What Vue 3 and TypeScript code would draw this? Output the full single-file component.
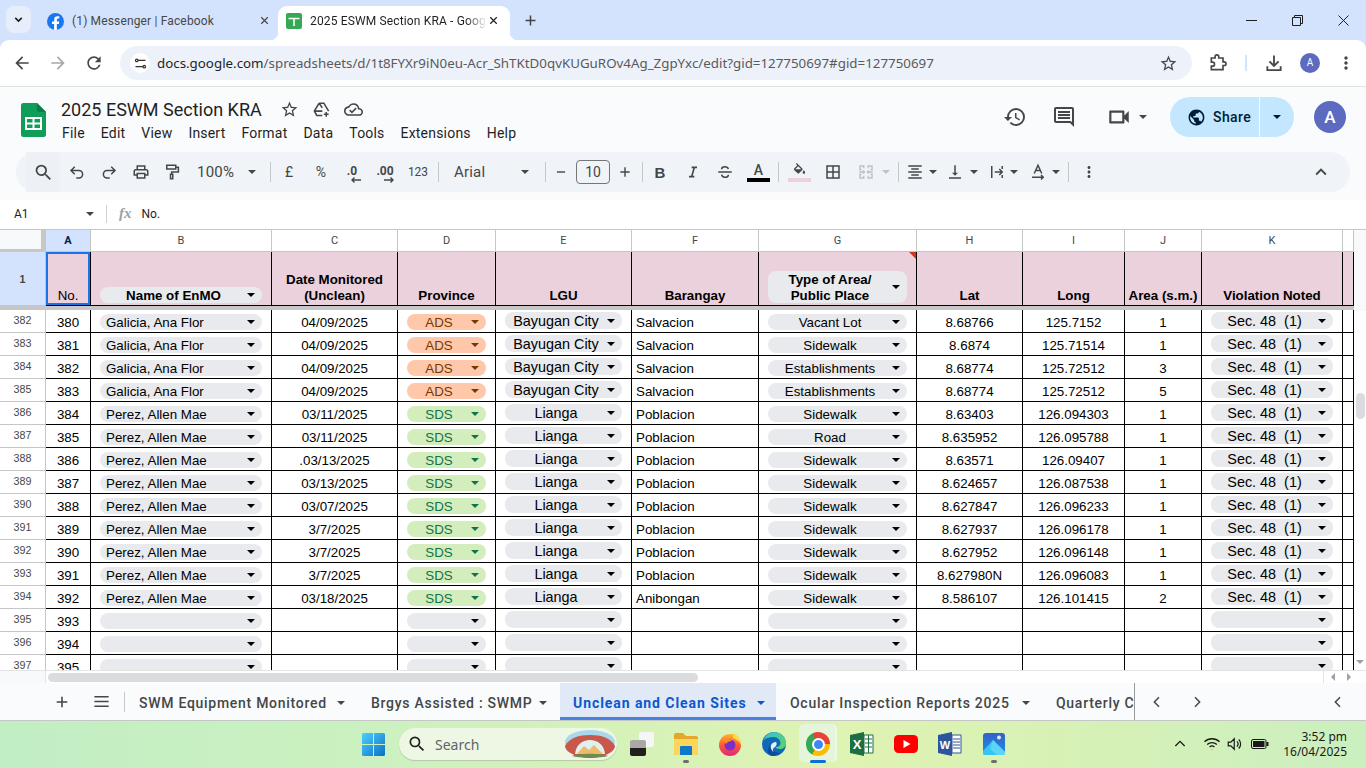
<script setup lang="ts">
import { h } from 'vue'

interface Row {
  n: number
  no: number
  name?: string
  date?: string
  prov?: 'ADS' | 'SDS'
  lgu?: string
  brgy?: string
  type?: string
  lat?: string
  long?: string
  area?: string
  sec?: string
}

const ICONS: Record<string, { d: string; stroke?: number }> = {
  back: { d: 'M20 11H7.83l5.59-5.59L12 4l-8 8 8 8 1.41-1.41L7.83 13H20v-2z' },
  forward: { d: 'M12 4l-1.41 1.41L16.17 11H4v2h12.17l-5.58 5.59L12 20l8-8z' },
  reload: { d: 'M17.65 6.35A7.958 7.958 0 0 0 12 4c-4.42 0-7.99 3.58-7.99 8s3.57 8 7.99 8c3.73 0 6.84-2.55 7.73-6h-2.08A5.99 5.99 0 0 1 12 18c-3.31 0-6-2.69-6-6s2.69-6 6-6c1.66 0 3.14.69 4.22 1.78L13 11h7V4l-2.35 2.35z' },
  star: { d: 'M22 9.24l-7.19-.62L12 2 9.19 8.63 2 9.24l5.46 4.73L5.82 21 12 17.27 18.18 21l-1.63-7.03L22 9.24zM12 15.4l-3.76 2.27 1-4.28-3.32-2.88 4.38-.38L12 6.1l1.71 4.04 4.38.38-3.32 2.88 1 4.28L12 15.4z' },
  puzzle: { d: 'M4 6h4.5V4.5a2.2 2.2 0 0 1 4.4 0V6H18v4.6h1.4a2.2 2.2 0 0 1 0 4.4H18v5H4v-4.2h1.4a2.4 2.4 0 0 0 0-4.8H4z', stroke: 2 },
  download: { d: 'M12 3v12M6.5 10l5.5 5.5 5.5-5.5M4 16v4.5h16V16', stroke: 2.2 },
  kebab: { d: 'M12 8c1.1 0 2-.9 2-2s-.9-2-2-2-2 .9-2 2 .9 2 2 2zm0 2c-1.1 0-2 .9-2 2s.9 2 2 2 2-.9 2-2-.9-2-2-2zm0 6c-1.1 0-2 .9-2 2s.9 2 2 2 2-.9 2-2-.9-2-2-2z' },
  tune: { d: 'M8 7a2 2 0 1 0-4 0 2 2 0 0 0 4 0zM8 7h12M20 17a2 2 0 1 0-4 0 2 2 0 0 0 4 0zM16 17H4', stroke: 2 },
  close: { d: 'M6 6l12 12M18 6L6 18', stroke: 2.2 },
  plus: { d: 'M12 4v16M4 12h16', stroke: 2.4 },
  chevDown: { d: 'M6 9l6 6 6-6', stroke: 3 },
  addDrive: { d: 'M9 4h6l6 10M9 4L3 14l3 5.5h7M3 14h10M18 15v6M15 18h6M9 4l4 6', stroke: 2 },
  cloud: { d: 'M19.35 10.04A7.49 7.49 0 0 0 12 4C9.11 4 6.6 5.64 5.35 8.04A5.994 5.994 0 0 0 0 14c0 3.31 2.69 6 6 6h13c2.76 0 5-2.24 5-5 0-2.64-2.05-4.78-4.65-4.96zM19 18H6c-2.21 0-4-1.79-4-4 0-2.05 1.53-3.76 3.56-3.97l1.07-.11.5-.95A5.469 5.469 0 0 1 12 6c2.62 0 4.88 1.86 5.39 4.43l.3 1.5 1.53.11A2.98 2.98 0 0 1 22 15c0 1.65-1.35 3-3 3zm-9-3.82l-2.09-2.09L6.5 13.5 10 17l6.01-6.01-1.41-1.41z' },
  history: { d: 'M13 3a9 9 0 0 0-9 9H1l3.89 3.89.07.14L9 12H6c0-3.87 3.13-7 7-7s7 3.13 7 7-3.13 7-7 7c-1.93 0-3.68-.79-4.94-2.06l-1.42 1.42A8.954 8.954 0 0 0 13 21a9 9 0 0 0 0-18zm-1 5v5l4.28 2.54.72-1.21-3.5-2.08V8H12z' },
  comment: { d: 'M20 2H4c-1.1 0-2 .9-2 2v12c0 1.1.9 2 2 2h14l4 4V4c0-1.1-.9-2-2-2zm0 15.17L18.83 16H4V4h16v13.17zM6 12h12v2H6zm0-3h12v2H6zm0-3h12v2H6z' },
  video: { d: 'M15 8v8H5V8h10m1-2H4c-.55 0-1 .45-1 1v10c0 .55.45 1 1 1h12c.55 0 1-.45 1-1v-3.5l4 4v-11l-4 4V7c0-.55-.45-1-1-1z' },
  globe: { d: 'M12 2C6.48 2 2 6.48 2 12s4.48 10 10 10 10-4.48 10-10S17.52 2 12 2zm-1 17.93c-3.95-.49-7-3.85-7-7.93 0-.62.08-1.21.21-1.79L9 15v1c0 1.1.9 2 2 2v1.93zm6.9-2.54c-.26-.81-1-1.39-1.9-1.39h-1v-3c0-.55-.45-1-1-1H8v-2h2c.55 0 1-.45 1-1V7h2c1.1 0 2-.9 2-2v-.41c2.93 1.19 5 4.06 5 7.41 0 2.08-.8 3.97-2.1 5.39z' },
  search: { d: 'M15.5 14h-.79l-.28-.27A6.471 6.471 0 0 0 16 9.5 6.5 6.5 0 1 0 9.5 16c1.61 0 3.09-.59 4.23-1.57l.27.28v.79l5 4.99L20.49 19l-4.99-5zm-6 0C7.01 14 5 11.99 5 9.5S7.01 5 9.5 5 14 7.01 14 9.5 11.99 14 9.5 14z' },
  undo: { d: 'M9 15L4 10l5-5M4 10h10.5a5 5 0 0 1 0 10H11', stroke: 2 },
  redo: { d: 'M15 15l5-5-5-5M20 10H9.5a5 5 0 0 0 0 10H13', stroke: 2 },
  print: { d: 'M19 8h-1V3H6v5H5c-1.66 0-3 1.34-3 3v6h4v4h12v-4h4v-6c0-1.66-1.34-3-3-3zM8 5h8v3H8V5zm8 14H8v-4h8v4zm2-4v-2H6v2H4v-4c0-.55.45-1 1-1h14c.55 0 1 .45 1 1v4h-2z' },
  paint: { d: 'M5 3h12v5H5zM17 5.5h3.5V12H11.5v3M10 15h3v6h-3z', stroke: 2 },
  minus: { d: 'M5 12h14', stroke: 2.4 },
  italic: { d: 'M10 5h8M6 19h8M14 5l-4 14', stroke: 2.4 },
  strike: { d: 'M3 12h18M16.5 8c-.5-1.8-2.2-3-4.5-3-2.6 0-4.5 1.4-4.5 3.4M7.5 15.5c.4 2 2.2 3.5 4.5 3.5s4.5-1.3 4.5-3.5', stroke: 2 },
  fill: { d: 'M16.56 8.94L7.62 0 6.21 1.41l2.38 2.38-5.15 5.15c-.59.59-.59 1.54 0 2.12l5.5 5.5c.29.29.68.44 1.06.44s.77-.15 1.06-.44l5.5-5.5c.59-.58.59-1.53 0-2.12zM5.21 10L10 5.21 14.79 10H5.21zM19 11.5s-2 2.17-2 3.5c0 1.1.9 2 2 2s2-.9 2-2c0-1.33-2-3.5-2-3.5z' },
  borders: { d: 'M3 3v18h18V3H3zm8 16H5v-6h6v6zm0-8H5V5h6v6zm8 8h-6v-6h6v6zm0-8h-6V5h6v6z' },
  merge: { d: 'M9 7V4H4v5h2M15 7V4h5v5h-2M9 17v3H4v-5h2M15 17v3h5v-5h-2M3 12h7M8 10l2 2-2 2M21 12h-7M16 10l-2 2 2 2', stroke: 2 },
  halign: { d: 'M7 15v2h10v-2H7zm-4 6h18v-2H3v2zm0-8h18v-2H3v2zm4-6v2h10V7H7zM3 3v2h18V3H3z' },
  valign: { d: 'M16 13h-3V3h-2v10H8l4 4 4-4zM4 19v2h16v-2H4z' },
  wrap: { d: 'M5 4v16M19 4v4M19 16v4M9 12h10M15 8l4 4-4 4', stroke: 2 },
  rotate: { d: 'M7 14l5-11 5 11M8.8 10h6.4M4 19h15M16 16l3 3-3 3', stroke: 2 },
  chevUp: { d: 'M7.41 15.41L12 10.83l4.59 4.58L18 14l-6-6-6 6z' },
  menu: { d: 'M3 6h18M3 12h18M3 18h18', stroke: 2 },
  left: { d: 'M15 5l-7 7 7 7', stroke: 2.2 },
  right: { d: 'M9 5l7 7-7 7', stroke: 2.2 },
  wifi: { d: 'M2 9a14.5 14.5 0 0 1 20 0M5.5 12.6a9.5 9.5 0 0 1 13 0M8.8 16a4.8 4.8 0 0 1 6.4 0M12 18.500v.5', stroke: 1.7 },
  volume: { d: 'M3 9.5v5h3.5L11 19V5L6.5 9.5zM14.5 8.5a5 5 0 0 1 0 7M17 6a8.5 8.5 0 0 1 0 12', stroke: 1.6 },
  chevTray: { d: 'M5 15l7-7 7 7', stroke: 2 }
}

const Icon = (props: { name: string; size?: number }) => {
  const icon = ICONS[props.name]
  const size = props.size ?? 18
  return h('svg', { viewBox: '0 0 24 24', width: size, height: size, style: { flex: 'none', display: 'block' } }, [
    icon.stroke
      ? h('path', { d: icon.d, fill: 'none', stroke: 'currentColor', 'stroke-width': icon.stroke })
      : h('path', { d: icon.d, fill: 'currentColor' })
  ])
}
Icon.props = ['name', 'size']

interface Tool {
  kind: 'icon' | 'text' | 'sep' | 'caret' | 'dec' | 'color' | 'size' | 'select'
  ml: number
  w?: number
  name?: string
  text?: string
  dim?: boolean
  tint?: string
  size?: number
  arrow?: 'left' | 'right'
}

const tools: Tool[] = [
  { kind: 'icon', name: 'search', ml: 0, w: 34, size: 21 },
  { kind: 'icon', name: 'undo', ml: 5, w: 24 },
  { kind: 'icon', name: 'redo', ml: 8, w: 24 },
  { kind: 'icon', name: 'print', ml: 8, w: 24 },
  { kind: 'icon', name: 'paint', ml: 7, w: 24 },
  { kind: 'select', text: '100%', ml: 4, w: 74 },
  { kind: 'sep', ml: 8 },
  { kind: 'text', text: '£', ml: 8, w: 20 },
  { kind: 'text', text: '%', ml: 12, w: 20 },
  { kind: 'dec', text: '.0', arrow: 'left', ml: 11, w: 20 },
  { kind: 'dec', text: '.00', arrow: 'right', ml: 11, w: 24 },
  { kind: 'text', text: '123', ml: 9, w: 24 },
  { kind: 'sep', ml: 8 },
  { kind: 'select', text: 'Arial', ml: 6, w: 90 },
  { kind: 'sep', ml: 10 },
  { kind: 'icon', name: 'minus', ml: 8, w: 14, size: 14 },
  { kind: 'size', text: '10', ml: 8, w: 34 },
  { kind: 'icon', name: 'plus', ml: 8, w: 14, size: 14 },
  { kind: 'sep', ml: 10 },
  { kind: 'text', text: 'B', ml: 7, w: 20 },
  { kind: 'icon', name: 'italic', ml: 13, w: 20, size: 16 },
  { kind: 'icon', name: 'strike', ml: 12, w: 20 },
  { kind: 'color', text: 'A', ml: 12, w: 23, tint: '#000' },
  { kind: 'sep', ml: 8 },
  { kind: 'color', name: 'fill', ml: 9, w: 23, tint: '#ead1dc' },
  { kind: 'icon', name: 'borders', ml: 12, w: 20 },
  { kind: 'icon', name: 'merge', ml: 13, w: 20, dim: true },
  { kind: 'caret', ml: 6, w: 8, dim: true },
  { kind: 'sep', ml: 8 },
  { kind: 'icon', name: 'halign', ml: 6, w: 20 },
  { kind: 'caret', ml: 4, w: 8 },
  { kind: 'icon', name: 'valign', ml: 8, w: 20 },
  { kind: 'caret', ml: 5, w: 8 },
  { kind: 'icon', name: 'wrap', ml: 9, w: 20 },
  { kind: 'caret', ml: 3, w: 8 },
  { kind: 'icon', name: 'rotate', ml: 10, w: 20 },
  { kind: 'caret', ml: 4, w: 8 },
  { kind: 'sep', ml: 8 },
  { kind: 'icon', name: 'kebab', ml: 10, w: 20 }
]

const menus = ['File', 'Edit', 'View', 'Insert', 'Format', 'Data', 'Tools', 'Extensions', 'Help']

const sheets = [
  { label: 'SWM Equipment Monitored', w: 232 },
  { label: 'Brgys Assisted : SWMP', w: 202 },
  { label: 'Unclean and Clean Sites', w: 216, active: true },
  { label: 'Ocular Inspection Reports 2025', w: 267 }
]

const columns = ['A', 'B', 'C', 'D', 'E', 'F', 'G', 'H', 'I', 'J', 'K', '']

const galicia = { name: 'Galicia, Ana Flor', date: '04/09/2025', prov: 'ADS', lgu: 'Bayugan City', brgy: 'Salvacion', sec: 'Sec. 48  (1)' } as const
const perez = { name: 'Perez, Allen Mae', prov: 'SDS', lgu: 'Lianga', brgy: 'Poblacion', type: 'Sidewalk', area: '1', sec: 'Sec. 48  (1)' } as const

const rows: Row[] = [
  { ...galicia, n: 382, no: 380, type: 'Vacant Lot', lat: '8.68766', long: '125.7152', area: '1' },
  { ...galicia, n: 383, no: 381, type: 'Sidewalk', lat: '8.6874', long: '125.71514', area: '1' },
  { ...galicia, n: 384, no: 382, type: 'Establishments', lat: '8.68774', long: '125.72512', area: '3' },
  { ...galicia, n: 385, no: 383, type: 'Establishments', lat: '8.68774', long: '125.72512', area: '5' },
  { ...perez, n: 386, no: 384, date: '03/11/2025', lat: '8.63403', long: '126.094303' },
  { ...perez, n: 387, no: 385, date: '03/11/2025', type: 'Road', lat: '8.635952', long: '126.095788' },
  { ...perez, n: 388, no: 386, date: '.03/13/2025', lat: '8.63571', long: '126.09407' },
  { ...perez, n: 389, no: 387, date: '03/13/2025', lat: '8.624657', long: '126.087538' },
  { ...perez, n: 390, no: 388, date: '03/07/2025', lat: '8.627847', long: '126.096233' },
  { ...perez, n: 391, no: 389, date: '3/7/2025', lat: '8.627937', long: '126.096178' },
  { ...perez, n: 392, no: 390, date: '3/7/2025', lat: '8.627952', long: '126.096148' },
  { ...perez, n: 393, no: 391, date: '3/7/2025', lat: '8.627980N', long: '126.096083' },
  { ...perez, n: 394, no: 392, date: '03/18/2025', brgy: 'Anibongan', lat: '8.586107', long: '126.101415', area: '2' },
  { n: 395, no: 393 },
  { n: 396, no: 394 },
  { n: 397, no: 395 }
]

const taskIcons = ['taskview', 'explorer', 'firefox', 'edge', 'chrome', 'excel', 'youtube', 'word', 'photos']
</script>

<template>
  <div class="app">
    <!-- browser tabs -->
    <div class="tabstrip">
      <div class="tab-search"><Icon name="chevDown" :size="13" /></div>
      <div class="tab">
        <svg class="favicon" viewBox="0 0 24 24" width="17" height="17">
          <circle cx="12" cy="12" r="12" fill="#1877f2" />
          <path d="M16.7 15.5l.5-3.5h-3.3V9.8c0-1 .5-1.9 2-1.9h1.5v-3s-1.4-.2-2.7-.2c-2.7 0-4.5 1.6-4.5 4.6V12H7v3.5h3V24h3.9v-8.5z" fill="#fff" />
        </svg>
        <span class="tab-title">(1) Messenger | Facebook</span>
        <Icon name="close" :size="13" class="tab-x" />
      </div>
      <div class="tab active">
        <svg class="favicon" viewBox="0 0 16 16" width="16" height="16">
          <rect width="16" height="16" rx="2" fill="#34a853" />
          <path d="M2.5 5.5h11M8 5.5V13" stroke="#fff" stroke-width="1.6" fill="none" />
        </svg>
        <span class="tab-title fade">2025 ESWM Section KRA - Google Sheets</span>
        <Icon name="close" :size="13" class="tab-x dark" />
      </div>
      <Icon name="plus" :size="15" class="new-tab" />
      <div class="win-controls">
        <span class="win-btn"><svg width="11" height="11" viewBox="0 0 11 11"><path d="M0 5.5h11" stroke="#1f1f1f" /></svg></span>
        <span class="win-btn"><svg width="11" height="11" viewBox="0 0 11 11"><path d="M.5 2.5h8v8h-8zM2.5 2.5v-2h8v8h-2" stroke="#1f1f1f" fill="none" /></svg></span>
        <span class="win-btn"><svg width="11" height="11" viewBox="0 0 11 11"><path d="M.5.5l10 10M10.5.5l-10 10" stroke="#1f1f1f" fill="none" /></svg></span>
      </div>
    </div>

    <!-- address bar -->
    <div class="browserbar">
      <Icon name="back" :size="20" />
      <Icon name="forward" :size="20" class="muted" />
      <Icon name="reload" :size="20" />
      <div class="omnibox">
        <span class="site-btn"><Icon name="tune" :size="15" /></span>
        <span class="url"><span class="url-host">docs.google.com</span>/spreadsheets/d/1t8FYXr9iN0eu-Acr_ShTKtD0qvKUGuROv4Ag_ZgpYxc/edit?gid=127750697#gid=127750697</span>
        <Icon name="star" :size="19" class="omni-star" />
      </div>
      <Icon name="puzzle" :size="20" class="ext" />
      <span class="bar-sep"></span>
      <Icon name="download" :size="20" class="dl" />
      <span class="mini-avatar">A</span>
      <Icon name="kebab" :size="20" class="ext" />
    </div>

    <!-- docs header -->
    <div class="docheader">
      <svg class="sheets-logo" viewBox="0 0 25 34" width="25" height="34">
        <path d="M2.5 0H16l9 9v22.5a2.5 2.5 0 0 1-2.5 2.5h-20A2.5 2.5 0 0 1 0 31.5v-29A2.5 2.5 0 0 1 2.5 0z" fill="#0f9d58" />
        <path d="M16 0l9 9h-6.5A2.5 2.5 0 0 1 16 6.500z" fill="#0a7d45" />
        <path d="M5 15h15v11H5zM12.500 15v11M5 20.500h15" fill="none" stroke="#fff" stroke-width="2" />
      </svg>
      <div class="doc-main">
        <div class="doc-title-row">
          <span class="doc-title">2025 ESWM Section KRA</span>
          <Icon name="star" :size="19" class="t-star" />
          <Icon name="addDrive" :size="19" class="t-ic" />
          <Icon name="cloud" :size="19" class="t-ic" />
        </div>
        <div class="doc-menus">
          <span v-for="m in menus" :key="m">{{ m }}</span>
        </div>
      </div>
      <div class="doc-actions">
        <Icon name="history" :size="24" />
        <Icon name="comment" :size="24" class="act-comment" />
        <Icon name="video" :size="26" class="act-video" />
        <svg class="caret act-caret" viewBox="0 0 8 4" width="8" height="4"><path d="M0 0h8L4 4z" /></svg>
        <div class="share">
          <div class="share-main"><Icon name="globe" :size="19" /><span>Share</span></div>
          <div class="share-more"><svg class="caret" viewBox="0 0 8 4" width="8" height="4"><path d="M0 0h8L4 4z" /></svg></div>
        </div>
        <span class="avatar">A</span>
      </div>
    </div>

    <!-- formatting toolbar -->
    <div class="toolbar-wrap">
      <div class="toolbar">
        <template v-for="(t, i) in tools" :key="i">
          <span v-if="t.kind === 'sep'" class="tool-sep" :style="{ marginLeft: t.ml + 'px' }"></span>
          <span v-else class="tool" :class="[t.kind, { dim: t.dim, hl: t.name === 'search' }]" :style="{ marginLeft: t.ml + 'px', width: t.w + 'px' }">
            <Icon v-if="t.kind === 'icon'" :name="t.name!" :size="t.size" />
            <span v-else-if="t.kind === 'text'" :class="{ bold: t.text === 'B', small: t.text === '123' }">{{ t.text }}</span>
            <template v-else-if="t.kind === 'select'">
              <span class="sel-text">{{ t.text }}</span>
              <svg class="caret" viewBox="0 0 8 4" width="8" height="4"><path d="M0 0h8L4 4z" /></svg>
            </template>
            <svg v-else-if="t.kind === 'caret'" class="caret" viewBox="0 0 8 4" width="8" height="4"><path d="M0 0h8L4 4z" /></svg>
            <span v-else-if="t.kind === 'size'" class="size-box">{{ t.text }}</span>
            <span v-else-if="t.kind === 'dec'" class="dec">
              <span>{{ t.text }}</span>
              <svg width="10" height="6" viewBox="0 0 10 6">
                <path v-if="t.arrow === 'left'" d="M10 3H1M3.500.5L1 3l2.500 2.500" fill="none" stroke="currentColor" stroke-width="1.400" />
                <path v-else d="M0 3h9M6.500.5L9 3 6.500 5.500" fill="none" stroke="currentColor" stroke-width="1.400" />
              </svg>
            </span>
            <span v-else-if="t.kind === 'color'" class="color-tool">
              <span v-if="t.text" class="color-a">{{ t.text }}</span>
              <Icon v-else :name="t.name!" :size="15" />
              <span class="color-bar" :style="{ background: t.tint }"></span>
            </span>
          </span>
        </template>
        <Icon name="chevUp" :size="22" class="collapse" />
      </div>
    </div>

    <!-- formula bar -->
    <div class="formula">
      <span class="namebox">A1</span>
      <svg class="caret" viewBox="0 0 8 4" width="8" height="4"><path d="M0 0h8L4 4z" /></svg>
      <span class="formula-sep"></span>
      <span class="fx">fx</span>
      <span class="formula-val">No.</span>
    </div>

    <!-- the sheet -->
    <div class="sheet">
      <div class="grid">
        <div class="row col-head">
          <div class="corner"></div>
          <div v-for="(c, i) in columns" :key="i" class="col-cell" :class="{ selected: c === 'A' }">{{ c }}</div>
        </div>

        <div class="row head-row">
          <div class="rowno frozen">1</div>
          <div class="cell head sel-cell">No.</div>
          <div class="cell head">
            <div class="chip"><span class="chip-text center bold">Name of EnMO</span><svg class="caret" viewBox="0 0 8 4" width="8" height="4"><path d="M0 0h8L4 4z" /></svg></div>
          </div>
          <div class="cell head bold">Date Monitored<br />(Unclean)</div>
          <div class="cell head bold">Province</div>
          <div class="cell head bold">LGU</div>
          <div class="cell head bold">Barangay</div>
          <div class="cell head note">
            <div class="chip tall"><span class="chip-text center bold">Type of Area/<br />Public Place</span><svg class="caret" viewBox="0 0 8 4" width="8" height="4"><path d="M0 0h8L4 4z" /></svg></div>
          </div>
          <div class="cell head bold">Lat</div>
          <div class="cell head bold">Long</div>
          <div class="cell head bold">Area (s.m.)</div>
          <div class="cell head bold">Violation Noted</div>
          <div class="cell head"></div>
        </div>

        <div class="freeze-bar"></div>

        <div v-for="r in rows" :key="r.n" class="row data-row">
          <div class="rowno">{{ r.n }}</div>
          <div class="cell">{{ r.no }}</div>
          <div class="cell">
            <div class="chip"><span class="chip-text">{{ r.name }}</span><svg class="caret" viewBox="0 0 8 4" width="8" height="4"><path d="M0 0h8L4 4z" /></svg></div>
          </div>
          <div class="cell">{{ r.date }}</div>
          <div class="cell">
            <div class="chip" :class="r.prov"><span class="chip-text center">{{ r.prov }}</span><svg class="caret" viewBox="0 0 8 4" width="8" height="4"><path d="M0 0h8L4 4z" /></svg></div>
          </div>
          <div class="cell big">
            <div class="chip"><span class="chip-text center">{{ r.lgu }}</span><svg class="caret" viewBox="0 0 8 4" width="8" height="4"><path d="M0 0h8L4 4z" /></svg></div>
          </div>
          <div class="cell left">{{ r.brgy }}</div>
          <div class="cell">
            <div class="chip"><span class="chip-text center">{{ r.type }}</span><svg class="caret" viewBox="0 0 8 4" width="8" height="4"><path d="M0 0h8L4 4z" /></svg></div>
          </div>
          <div class="cell">{{ r.lat }}</div>
          <div class="cell">{{ r.long }}</div>
          <div class="cell">{{ r.area }}</div>
          <div class="cell big">
            <div class="chip"><span class="chip-text center pre">{{ r.sec }}</span><svg class="caret" viewBox="0 0 8 4" width="8" height="4"><path d="M0 0h8L4 4z" /></svg></div>
          </div>
          <div class="cell"></div>
        </div>
      </div>
      <div class="vscroll">
        <div class="vscroll-head"></div>
        <div class="vscroll-thumb"></div>
        <svg class="vscroll-down caret" viewBox="0 0 8 4" width="8" height="4"><path d="M0 0h8L4 4z" /></svg>
      </div>
    </div>

    <div class="hscroll">
      <div class="hscroll-lead"></div>
      <div class="hscroll-thumb"></div>
      <div class="hscroll-btns">
        <svg viewBox="0 0 4 8" width="4" height="8"><path d="M4 0v8L0 4z" /></svg>
        <svg viewBox="0 0 4 8" width="4" height="8"><path d="M0 0v8l4-4z" /></svg>
      </div>
    </div>

    <!-- sheet tabs -->
    <div class="sheetbar">
      <Icon name="plus" :size="16" class="sb-plus" />
      <Icon name="menu" :size="19" class="sb-menu" />
      <span class="sb-sep"></span>
      <div class="sheet-tabs">
        <div v-for="s in sheets" :key="s.label" class="sheet-tab" :class="{ active: s.active }" :style="{ width: s.w + 'px' }">
          <span class="sheet-label">{{ s.label }}</span>
          <svg class="caret" viewBox="0 0 8 4" width="8" height="4"><path d="M0 0h8L4 4z" /></svg>
        </div>
        <div class="sheet-tab"><span class="sheet-label">Quarterly Compliance</span></div>
      </div>
      <Icon name="left" :size="16" class="sb-left" />
      <Icon name="right" :size="16" class="sb-right" />
      <Icon name="left" :size="16" class="sb-far" />
    </div>

    <!-- windows taskbar -->
    <div class="taskbar">
      <svg class="win-logo" viewBox="0 0 23 23" width="23" height="23">
        <defs>
          <linearGradient id="winblue" x1="0" y1="0" x2="1" y2="1">
            <stop offset="0" stop-color="#4fd0fb" />
            <stop offset="1" stop-color="#0a70c8" />
          </linearGradient>
        </defs>
        <path d="M0 1.500A1.500 1.500 0 0 1 1.500 0H11v11H0zM12 0h9.500A1.500 1.500 0 0 1 23 1.500V11H12zM0 12h11v11H1.500A1.500 1.500 0 0 1 0 21.500zM12 12h11v9.500a1.500 1.500 0 0 1-1.500 1.500H12z" fill="url(#winblue)" />
      </svg>
      <div class="win-search">
        <Icon name="search" :size="20" class="ws-icon" />
        <span>Search</span>
        <svg class="ws-art" viewBox="0 0 52 30" width="52" height="30">
          <ellipse cx="26" cy="13" rx="25" ry="12" fill="#a8d8ea" />
          <path d="M1 17C5 9 15 6 26 6s21 3 25 11c0 6-12 12-25 12S1 23 1 17z" fill="#c9574a" />
          <path d="M11 25c1-9 7-14 15-14s14 5 15 14z" fill="#dff0f0" />
          <path d="M13 25l7-8 5 4 5-5 9 9z" fill="#eeb96a" />
          <path d="M8 27c6-3 30-3 36 0-6 2-30 2-36 0z" fill="#6e8c4b" />
        </svg>
      </div>
      <div class="task-icons">
        <div v-for="ic in taskIcons" :key="ic" class="task-icon" :class="ic">
          <template v-if="ic === 'taskview'">
            <span class="tv-back"></span><span class="tv-front"></span>
          </template>
          <svg v-else-if="ic === 'explorer'" viewBox="0 0 24 22" width="24" height="22">
            <path d="M0 2a2 2 0 0 1 2-2h7l3 3h10a2 2 0 0 1 2 2v15a2 2 0 0 1-2 2H2a2 2 0 0 1-2-2z" fill="#e4a72a" />
            <path d="M0 6h24v14a2 2 0 0 1-2 2H2a2 2 0 0 1-2-2z" fill="#fcd55c" />
            <path d="M7 13h10a1 1 0 0 1 1 1v8H6v-8a1 1 0 0 1 1-1z" fill="#0f79c9" />
          </svg>
          <svg v-else-if="ic === 'firefox'" viewBox="0 0 24 24" width="24" height="24">
            <defs>
              <linearGradient id="ffx" x1="0" y1="0" x2="0" y2="1">
                <stop offset="0" stop-color="#ffb52e" />
                <stop offset=".5" stop-color="#ff5a36" />
                <stop offset="1" stop-color="#e0267c" />
              </linearGradient>
            </defs>
            <circle cx="12" cy="13" r="11" fill="url(#ffx)" />
            <path d="M15 1c5 2 8 6 8 12-2-4-5-6-8-7z" fill="#ffd93b" />
            <circle cx="12" cy="13" r="5.500" fill="#7b2fc4" />
            <path d="M6 8c3-2 7-1 8 1-3 0-5 1-6 3-1-1-2-2-2-4z" fill="#ff8b2c" />
          </svg>
          <svg v-else-if="ic === 'edge'" viewBox="0 0 24 24" width="24" height="24">
            <defs>
              <linearGradient id="edg" x1="0" y1="0" x2="1" y2="1">
                <stop offset="0" stop-color="#35c1d8" />
                <stop offset="1" stop-color="#5cd662" />
              </linearGradient>
            </defs>
            <circle cx="12" cy="12" r="12" fill="#0f68b8" />
            <path d="M1 9C3 3 8 0 12 0c7 0 12 5 12 11 0 4-3 6-6.500 6-2 0-4-1-4-2 3 0 5-1.500 5-4 0-3-3-6-7-6C7 5 3 6 1 9z" fill="url(#edg)" />
            <path d="M9 13c0 4 3 8 9 8-2 2-5 3-7 3-4 0-6-4-5-7 .5-2 2-4 3-4z" fill="#0b4f9c" />
            <path d="M9 13c1-2 3-3 5-3 1 1 1 3-1 5-2 1-3 3-1 5-2-1-4-4-3-7z" fill="#fff" opacity=".9" />
          </svg>
          <template v-else-if="ic === 'chrome'">
            <span class="chrome-tile"></span>
            <span class="chrome-logo"><span class="chrome-dot"></span></span>
            <span class="chrome-line"></span>
          </template>
          <svg v-else-if="ic === 'excel'" viewBox="0 0 24 24" width="24" height="24">
            <path d="M14 3h9v18h-9z" fill="#fff" stroke="#1d6f42" />
            <path d="M15 7h7M15 11h7M15 15h7M18.500 3v18" stroke="#1d6f42" fill="none" />
            <path d="M0 3l14-3v24L0 21z" fill="#1d6f42" />
            <text x="7" y="17" text-anchor="middle" font-size="13" font-weight="700" fill="#fff" font-family="Liberation Sans, sans-serif">X</text>
          </svg>
          <svg v-else-if="ic === 'youtube'" viewBox="0 0 24 18" width="24" height="18">
            <rect width="24" height="18" rx="4.500" fill="#f00" />
            <path d="M9.500 5v8l7-4z" fill="#fff" />
          </svg>
          <svg v-else-if="ic === 'word'" viewBox="0 0 24 24" width="24" height="24">
            <path d="M14 3h9v18h-9z" fill="#fff" stroke="#2b579a" />
            <path d="M15 7h7M15 10h7M15 13h7M15 16h7" stroke="#2b579a" fill="none" />
            <path d="M0 3l14-3v24L0 21z" fill="#2b579a" />
            <text x="7" y="16.500" text-anchor="middle" font-size="11" font-weight="700" fill="#fff" font-family="Liberation Sans, sans-serif">W</text>
          </svg>
          <svg v-else-if="ic === 'photos'" viewBox="0 0 22 22" width="22" height="22">
            <defs>
              <linearGradient id="pho" x1="0" y1="0" x2="0" y2="1">
                <stop offset="0" stop-color="#3461c8" />
                <stop offset="1" stop-color="#1f8fe8" />
              </linearGradient>
            </defs>
            <rect width="22" height="22" rx="3" fill="url(#pho)" />
            <circle cx="16" cy="4.500" r="2" fill="#dceafa" />
            <path d="M0 18L10 7l12 12v1a2 2 0 0 1-2 2H2a2 2 0 0 1-2-2z" fill="#36c5f0" />
            <path d="M10 7l12 12v1a2 2 0 0 1-2 2h-6l-7-6z" fill="#5bd6f7" />
          </svg>
          <span v-if="ic === 'explorer' || ic === 'photos'" class="task-dot"></span>
        </div>
      </div>
      <div class="tray">
        <Icon name="chevTray" :size="16" />
        <Icon name="wifi" :size="18" class="tray-wifi" />
        <Icon name="volume" :size="18" class="tray-vol" />
        <svg class="tray-bat" viewBox="0 0 18 10" width="18" height="10">
          <rect x=".5" y=".5" width="14.500" height="9" rx="1.500" fill="none" stroke="#1a1a1a" />
          <rect x="2" y="2" width="11.500" height="6" fill="#1a1a1a" />
          <rect x="15.500" y="3" width="2" height="4" fill="#1a1a1a" />
        </svg>
        <div class="clock"><span>3:52 pm</span><span>16/04/2025</span></div>
      </div>
    </div>
  </div>
</template>

<style>
html,
body {
  margin: 0;
  overflow: hidden;
}
</style>

<style scoped>
.app {
  --cols: 46px 45px 181px 126px 98px 136px 127px 158px 106px 102px 77px 141px 11px;
  width: 1366px;
  height: 768px;
  overflow: hidden;
  display: flex;
  flex-direction: column;
  background: #d3e3fd;
  font-family: Roboto, sans-serif;
  color: #444746;
}

/* ---------- browser chrome ---------- */
.tabstrip {
  height: 40px;
  flex: none;
  display: flex;
  font-family: Roboto, sans-serif;
  font-size: 12px;
  letter-spacing: .15px;
}
.tab-search {
  width: 25px;
  height: 27px;
  margin: 6px 0 0 6px;
  border-radius: 8px;
  background: #e6eefc;
  color: #1f1f1f;
  display: flex;
  align-items: center;
  justify-content: center;
}
.tab {
  width: 231px;
  margin: 6px 0 0 16px;
  height: 34px;
  display: flex;
  align-items: center;
  position: relative;
  color: #474747;
}
.tab .favicon {
  flex: none;
  margin-top: -4px;
}
.tab-title {
  margin-left: 8px;
  flex: 1;
  white-space: nowrap;
  overflow: hidden;
  margin-top: -5px;
}
.tab-x {
  margin: -5px 7px 0 0;
  color: #474747;
}
.tab-x.dark {
  margin-right: 10px;
  color: #1f1f1f;
}
.tab.active {
  width: 232px;
  margin-left: 0;
  padding-left: 8px;
  box-sizing: border-box;
  background: #fff;
  border-radius: 9px 9px 0 0;
  color: #1f1f1f;
}
.tab.active::before,
.tab.active::after {
  content: "";
  position: absolute;
  bottom: 0;
  width: 8px;
  height: 8px;
}
.tab.active::before {
  left: -8px;
  background: radial-gradient(circle at 0 0, transparent 8px, #fff 8.5px);
}
.tab.active::after {
  right: -8px;
  background: radial-gradient(circle at 100% 0, transparent 8px, #fff 8.5px);
}
.fade {
  -webkit-mask-image: linear-gradient(90deg, #000 88%, transparent);
  mask-image: linear-gradient(90deg, #000 88%, transparent);
}
.new-tab {
  margin: 13px 0 0 13px;
  color: #444;
}
.win-controls {
  margin-left: auto;
  display: flex;
}
.win-btn {
  width: 46px;
  height: 40px;
  display: flex;
  align-items: center;
  justify-content: center;
}

.browserbar {
  height: 47px;
  flex: none;
  box-sizing: border-box;
  background: #fff;
  border-radius: 9px 9px 0 0;
  border-bottom: 1px solid #dfe1dc;
  display: flex;
  align-items: center;
  padding-left: 12px;
  gap: 16px;
  color: #474747;
}
.muted {
  color: #a8a8a8;
}
.omnibox {
  width: 1072px;
  height: 34px;
  background: #edf2fa;
  border-radius: 17px;
  display: flex;
  align-items: center;
  padding: 0 14px 0 10px;
  box-sizing: border-box;
}
.site-btn {
  width: 20px;
  height: 20px;
  border-radius: 50%;
  background: #fff;
  display: flex;
  align-items: center;
  justify-content: center;
  color: #333;
}
.url {
  margin-left: 7px;
  font-family: "Noto Sans", sans-serif;
  font-size: 13.33px;
  color: #5a5a5a;
  white-space: nowrap;
}
.url-host {
  color: #1f1f1f;
}
.omni-star {
  margin-left: auto;
}
.bar-sep {
  width: 2px;
  height: 16px;
  background: #d3e3fd;
  margin-left: 1px;
}
.ext {
  color: #474747;
}
.dl {
  margin-left: 1px;
  color: #474747;
}
.mini-avatar {
  width: 20px;
  height: 20px;
  border-radius: 50%;
  background: #5c6bc0;
  color: #fff;
  font: 10px/20px Roboto, sans-serif;
  text-align: center;
}

/* ---------- docs header ---------- */
.docheader {
  height: 65px;
  flex: none;
  background: #f9fbfd;
  display: flex;
  padding-left: 21px;
  box-sizing: border-box;
}
.sheets-logo {
  margin-top: 16px;
  flex: none;
}
.doc-main {
  margin-left: 15px;
}
.doc-title-row {
  height: 28px;
  margin-top: 8px;
  display: flex;
  align-items: center;
}
.doc-title {
  font-size: 18px;
  color: #1f1f1f;
}
.t-star {
  margin-left: 18px;
}
.t-ic {
  margin-left: 13px;
}
.doc-menus {
  margin-top: 0;
  margin-left: 1px;
  display: flex;
  gap: 16px;
  height: 20px;
  align-items: center;
  font-size: 14px;
  color: #1f1f1f;
  letter-spacing: .2px;
}
.doc-actions {
  margin-left: auto;
  margin-top: 10px;
  padding-right: 20px;
  height: 40px;
  display: flex;
  align-items: center;
}
.act-comment {
  margin-left: 25px;
}
.act-video {
  margin-left: 30px;
}
.act-caret {
  margin-left: 7px;
}
.share {
  margin-left: 23px;
  width: 124px;
  height: 40px;
  border-radius: 20px;
  background: #c2e7ff;
  display: flex;
  color: #001d35;
}
.share-main {
  width: 90px;
  box-sizing: border-box;
  padding-left: 17px;
  display: flex;
  align-items: center;
  gap: 7px;
  border-right: 1px solid #f9fbfd;
  font-size: 14px;
  font-weight: 500;
  letter-spacing: .4px;
}
.share-more {
  flex: 1;
  display: flex;
  align-items: center;
  justify-content: center;
}
.avatar {
  margin-left: 20px;
  width: 32px;
  height: 32px;
  border-radius: 50%;
  background: #5c6bc0;
  color: #fff;
  font-size: 17px;
  font-weight: 500;
  line-height: 32px;
  text-align: center;
}
.caret {
  fill: currentColor;
  flex: none;
  display: block;
}

/* ---------- toolbar ---------- */
.toolbar-wrap {
  height: 48px;
  flex: none;
  background: #f9fbfd;
  padding: 0 16px;
  box-sizing: border-box;
}
.toolbar {
  height: 40px;
  background: #f0f4f9;
  border-radius: 20px;
  display: flex;
  align-items: center;
  padding: 0 18px 0 10px;
}
.tool {
  flex: none;
  height: 28px;
  display: flex;
  align-items: center;
  justify-content: center;
  font-size: 14px;
  color: #444746;
}
.tool.hl {
  height: 40px;
  background: #edf0f5;
}
.tool.dim {
  color: #bfc2c6;
}
.tool .small {
  font-size: 12px;
}
.tool .bold {
  font-family: "Liberation Sans", sans-serif;
  font-weight: 700;
  font-size: 15px;
}
.tool.select {
  justify-content: space-between;
  padding: 0 6px 0 9px;
  box-sizing: border-box;
  font-size: 15px;
  letter-spacing: .2px;
}
.tool-sep {
  flex: none;
  width: 1px;
  height: 20px;
  background: #c7c7c7;
}
.size-box {
  width: 34px;
  height: 24px;
  box-sizing: border-box;
  border: 1px solid #747775;
  border-radius: 4px;
  text-align: center;
  line-height: 22px;
  font-size: 14px;
}
.dec {
  display: flex;
  flex-direction: column;
  align-items: center;
  font-size: 12px;
  font-weight: 700;
  line-height: 12px;
}
.dec svg {
  display: block;
  margin: 0 0 -3px 8px;
}
.color-tool {
  display: flex;
  flex-direction: column;
  align-items: center;
  width: 23px;
}
.color-a {
  font-size: 14px;
  line-height: 15px;
  font-weight: 500;
}
.color-bar {
  margin-top: 0;
  width: 23px;
  height: 4px;
}
.collapse {
  margin-left: auto;
}

/* ---------- formula bar ---------- */
.formula {
  height: 30px;
  flex: none;
  box-sizing: border-box;
  background: #fff;
  border-bottom: 1px solid #c4c7c5;
  display: flex;
  align-items: center;
  padding-bottom: 2px;
  color: #1f1f1f;
  font-size: 12px;
}
.namebox {
  width: 86px;
  padding-left: 14px;
  box-sizing: border-box;
}
.formula .caret {
  color: #444;
}
.formula-sep {
  margin-left: 12px;
  width: 1px;
  height: 18px;
  background: #d0d0d0;
}
.fx {
  margin-left: 12px;
  font: italic 700 15px "Liberation Serif", serif;
  color: #9aa0a6;
}
.formula-val {
  margin-left: 10px;
}

/* ---------- grid ---------- */
.sheet {
  height: 440px;
  flex: none;
  display: flex;
  background: #fff;
  overflow: hidden;
}
.grid {
  width: 1354px;
  flex: none;
}
.row {
  display: grid;
  grid-template-columns: var(--cols);
  box-sizing: border-box;
}
.col-head {
  height: 22px;
  border-bottom: 1px solid #c4c7c5;
  font-size: 11px;
  color: #444746;
}
.corner {
  background: #f8f9fa;
  border-right: 5px solid #c7c7c7;
  border-bottom: 3px solid #c7c7c7;
  margin-bottom: -1px;
  box-sizing: border-box;
}
.col-cell {
  border-right: 1px solid #c4c7c5;
  display: flex;
  align-items: center;
  justify-content: center;
}
.col-cell.selected {
  background: #d3e3fd;
  font-weight: 700;
  color: #041e49;
}
.head-row {
  height: 54px;
}
.data-row {
  height: 23px;
}
.rowno {
  display: flex;
  align-items: center;
  justify-content: center;
  padding-bottom: 2px;
  box-sizing: border-box;
  font: 10.7px "Liberation Sans", sans-serif;
  color: #444746;
  border-right: 1px solid #c4c7c5;
  border-bottom: 1px solid #c4c7c5;
}
.rowno.frozen {
  background: #d3e3fd;
  font-weight: 700;
  padding-bottom: 0;
}
.cell {
  font: 13.33px/16px "Liberation Sans", sans-serif;
  color: #000;
  border-right: 1px solid #000;
  border-bottom: 1px solid #000;
  display: flex;
  align-items: flex-end;
  justify-content: center;
  text-align: center;
  padding-bottom: 1px;
  box-sizing: border-box;
  min-width: 0;
  white-space: nowrap;
  position: relative;
}
.cell.head {
  background: #ead1dc;
  padding-bottom: 1px;
}
.cell.bold,
.bold {
  font-weight: 700;
}
.cell.left {
  justify-content: flex-start;
  padding-left: 4px;
}
.sel-cell {
  box-shadow: inset 0 0 0 2px #1a73e8;
}
.note::after {
  content: "";
  position: absolute;
  top: 0;
  right: 0;
  border-top: 7px solid #d93025;
  border-left: 7px solid transparent;
}
.freeze-bar {
  height: 4px;
  background: #c7c7c7;
}
.chip {
  flex: 1;
  min-width: 0;
  margin: 0 9px 1px;
  height: 16px;
  border-radius: 8px;
  background: #e8eaed;
  display: flex;
  align-items: center;
  padding: 0 7px 0 6px;
  color: #000;
}
.cell.head .chip {
  margin-bottom: 1px;
}
.chip.tall {
  height: 32px;
}
.chip-text {
  flex: 1;
  min-width: 0;
  text-align: left;
  line-height: 16px;
  padding-top: 1px;
}
.chip-text.center {
  text-align: center;
  padding-right: 6px;
}
.chip-text.pre {
  white-space: pre;
}
.cell.big {
  padding-bottom: 3px;
  font-size: 14.4px;
}
.cell.big .chip {
  height: 17px;
  margin-bottom: 0;
}
.cell.big .chip-text {
  padding-top: 0;
}
.chip.ADS {
  background: #ffc8aa;
  color: #753800;
}
.chip.SDS {
  background: #d4edbc;
  color: #11734b;
}

.vscroll {
  flex: 1;
  position: relative;
  background: #fff;
}
.vscroll-head {
  height: 80px;
  margin-top: 1px;
  background: #f8f9fa;
}
.vscroll-thumb {
  position: absolute;
  left: 2px;
  right: 1px;
  top: 163px;
  height: 26px;
  border-radius: 5px;
  background: #dadce0;
}
.vscroll-down {
  position: absolute;
  left: 2px;
  bottom: 6px;
  color: #a0a0a0;
}

.hscroll {
  height: 13px;
  flex: none;
  background: #fff;
  border-top: 1px solid #e3e3e3;
  box-sizing: border-box;
  display: flex;
  align-items: center;
}
.hscroll-lead {
  width: 46px;
  height: 100%;
  box-sizing: border-box;
  border-right: 1px solid #e3e3e3;
  background: #f8f9fa;
}
.hscroll-thumb {
  margin-left: 2px;
  width: 650px;
  height: 9px;
  border-radius: 5px;
  background: #dadce0;
}
.hscroll-btns {
  margin-left: auto;
  width: 43px;
  height: 100%;
  display: flex;
  align-items: center;
  gap: 12px;
  padding-left: 7px;
  box-sizing: border-box;
  fill: #9aa0a6;
  border-left: 1px solid #e3e3e3;
}

/* ---------- sheet tabs ---------- */
.sheetbar {
  height: 38px;
  flex: none;
  box-sizing: border-box;
  background: #f9fbfd;
  border-bottom: 1px solid #c4c7c5;
  display: flex;
  align-items: center;
}
.sb-plus {
  margin-left: 54px;
}
.sb-menu {
  margin-left: 22px;
}
.sb-sep {
  margin-left: 13px;
  width: 1px;
  height: 20px;
  background: #c7c7c7;
}
.sheet-tabs {
  margin-left: 1px;
  width: 1009px;
  height: 37px;
  display: flex;
  overflow: hidden;
  border-right: 1px solid #9a9a9a;
  box-sizing: border-box;
}
.sheet-tab {
  flex: none;
  box-sizing: border-box;
  padding: 2px 13px 0 13px;
  display: flex;
  align-items: center;
  justify-content: space-between;
  font-size: 14px;
  font-weight: 500;
  color: #444746;
  white-space: nowrap;
  letter-spacing: .72px;
}
.sheet-tab.active {
  background: #e1e9f7;
  color: #0b57d0;
  border-bottom: 3px solid #4a80e0;
  padding-top: 5px;
  padding-right: 11px;
  font-weight: 700;
  letter-spacing: .93px;
}
.sheet-tab.active + .sheet-tab {
  padding-left: 14px;
}
.sb-left {
  margin-left: 14px;
}
.sb-right {
  margin-left: 24px;
}
.sb-far {
  margin-left: auto;
  margin-right: 20px;
}

/* ---------- taskbar ---------- */
.taskbar {
  height: 47px;
  flex: none;
  box-sizing: border-box;
  display: flex;
  align-items: center;
  padding: 0 0 1px 362px;
  background: linear-gradient(90deg, #c2eec4 0%, #cdf1bf 30%, #dff3b2 62%, #d6f1b6 80%, #cbefc0 100%);
}
.win-logo {
  flex: none;
}
.win-search {
  margin-left: 14px;
  width: 218px;
  height: 32px;
  box-sizing: border-box;
  border-radius: 16px;
  background: #eef6e4;
  display: flex;
  align-items: center;
  padding-left: 8px;
  font: 14px "Noto Sans", sans-serif;
  color: #5f6368;
  overflow: hidden;
  box-shadow: 0 1px 1px #b6c9a8;
}
.ws-icon {
  color: #202020;
}
.win-search span {
  margin-left: 8px;
}
.ws-art {
  margin-left: auto;
  margin-right: 1px;
}
.task-icons {
  margin-left: 13px;
  display: flex;
  gap: 20px;
}
.task-icon {
  width: 24px;
  height: 24px;
  position: relative;
  display: flex;
  align-items: center;
  justify-content: center;
}
.task-dot {
  position: absolute;
  left: 9px;
  bottom: -7px;
  width: 6px;
  height: 3px;
  border-radius: 2px;
  background: #6d6d6d;
}
.tv-back {
  position: absolute;
  right: 0;
  top: 0;
  width: 15px;
  height: 15px;
  background: #f6f6f6;
  border-radius: 2px;
}
.tv-front {
  position: absolute;
  left: 0;
  bottom: 0;
  width: 16px;
  height: 16px;
  border-radius: 2px;
  background: linear-gradient(180deg, #a8a8a8 50%, #1f1f1f 50%);
}
.chrome-tile {
  position: absolute;
  left: -7px;
  top: -8px;
  width: 36px;
  height: 38px;
  border-radius: 5px;
  background: #e4f5dc;
  box-shadow: 2px 0 0 #eef8e6;
}
.chrome-logo {
  position: relative;
  width: 24px;
  height: 24px;
  border-radius: 50%;
  background: conic-gradient(from 330deg, #ea4335 0 120deg, #fbbc04 0 240deg, #34a853 0);
  display: flex;
  align-items: center;
  justify-content: center;
}
.chrome-dot {
  width: 9px;
  height: 9px;
  border-radius: 50%;
  background: #4285f4;
  border: 2px solid #fff;
}
.chrome-line {
  position: absolute;
  left: 4px;
  bottom: -7px;
  width: 16px;
  height: 3px;
  border-radius: 2px;
  background: #0a6fd6;
}
.tray {
  margin-left: auto;
  padding-right: 19px;
  display: flex;
  align-items: center;
  color: #1a1a1a;
}
.tray-wifi {
  margin-left: 15px;
}
.tray-vol {
  margin-left: 5px;
}
.tray-bat {
  margin-left: 7px;
}
.clock {
  margin-left: 14px;
  display: flex;
  flex-direction: column;
  align-items: flex-end;
  font: 12px/15px "Noto Sans", sans-serif;
  color: #1a1a1a;
}
</style>
